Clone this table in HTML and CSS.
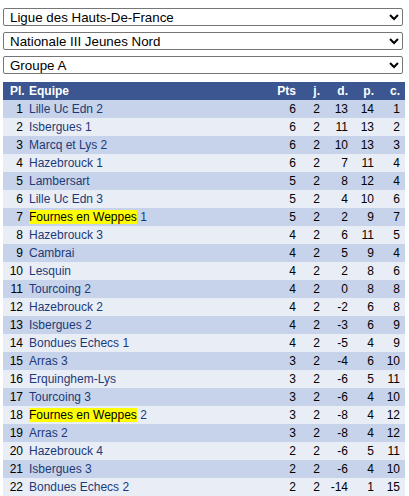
FILE: index.html
```html
<!DOCTYPE html>
<html lang="fr">
<head>
<meta charset="utf-8">
<title>Classement</title>
<link rel="stylesheet" href="styles.css">
</head>
<body>
<div class="filters">
  <select class="sel"><option>Ligue des Hauts-De-France</option></select>
  <select class="sel"><option>Nationale III Jeunes Nord</option></select>
  <select class="sel"><option>Groupe A</option></select>
</div>
<table class="standings">
  <colgroup>
    <col class="c-pl"><col class="c-team"><col class="c-pts"><col class="c-j"><col class="c-d"><col class="c-p"><col class="c-c">
  </colgroup>
  <thead>
    <tr><th class="pl">Pl.</th><th class="team">Equipe</th><th class="num">Pts</th><th class="num">j.</th><th class="num">d.</th><th class="num">p.</th><th class="num">c.</th></tr>
  </thead>
  <tbody>
    <tr><td class="pl">1</td><td class="team">Lille Uc Edn 2</td><td class="num">6</td><td class="num">2</td><td class="num">13</td><td class="num">14</td><td class="num">1</td></tr>
    <tr><td class="pl">2</td><td class="team">Isbergues 1</td><td class="num">6</td><td class="num">2</td><td class="num">11</td><td class="num">13</td><td class="num">2</td></tr>
    <tr><td class="pl">3</td><td class="team">Marcq et Lys 2</td><td class="num">6</td><td class="num">2</td><td class="num">10</td><td class="num">13</td><td class="num">3</td></tr>
    <tr><td class="pl">4</td><td class="team">Hazebrouck 1</td><td class="num">6</td><td class="num">2</td><td class="num">7</td><td class="num">11</td><td class="num">4</td></tr>
    <tr><td class="pl">5</td><td class="team">Lambersart</td><td class="num">5</td><td class="num">2</td><td class="num">8</td><td class="num">12</td><td class="num">4</td></tr>
    <tr><td class="pl">6</td><td class="team">Lille Uc Edn 3</td><td class="num">5</td><td class="num">2</td><td class="num">4</td><td class="num">10</td><td class="num">6</td></tr>
    <tr><td class="pl">7</td><td class="team"><span class="hl">Fournes en Weppes</span> 1</td><td class="num">5</td><td class="num">2</td><td class="num">2</td><td class="num">9</td><td class="num">7</td></tr>
    <tr><td class="pl">8</td><td class="team">Hazebrouck 3</td><td class="num">4</td><td class="num">2</td><td class="num">6</td><td class="num">11</td><td class="num">5</td></tr>
    <tr><td class="pl">9</td><td class="team">Cambrai</td><td class="num">4</td><td class="num">2</td><td class="num">5</td><td class="num">9</td><td class="num">4</td></tr>
    <tr><td class="pl">10</td><td class="team">Lesquin</td><td class="num">4</td><td class="num">2</td><td class="num">2</td><td class="num">8</td><td class="num">6</td></tr>
    <tr><td class="pl">11</td><td class="team">Tourcoing 2</td><td class="num">4</td><td class="num">2</td><td class="num">0</td><td class="num">8</td><td class="num">8</td></tr>
    <tr><td class="pl">12</td><td class="team">Hazebrouck 2</td><td class="num">4</td><td class="num">2</td><td class="num">-2</td><td class="num">6</td><td class="num">8</td></tr>
    <tr><td class="pl">13</td><td class="team">Isbergues 2</td><td class="num">4</td><td class="num">2</td><td class="num">-3</td><td class="num">6</td><td class="num">9</td></tr>
    <tr><td class="pl">14</td><td class="team">Bondues Echecs 1</td><td class="num">4</td><td class="num">2</td><td class="num">-5</td><td class="num">4</td><td class="num">9</td></tr>
    <tr><td class="pl">15</td><td class="team">Arras 3</td><td class="num">3</td><td class="num">2</td><td class="num">-4</td><td class="num">6</td><td class="num">10</td></tr>
    <tr><td class="pl">16</td><td class="team">Erquinghem-Lys</td><td class="num">3</td><td class="num">2</td><td class="num">-6</td><td class="num">5</td><td class="num">11</td></tr>
    <tr><td class="pl">17</td><td class="team">Tourcoing 3</td><td class="num">3</td><td class="num">2</td><td class="num">-6</td><td class="num">4</td><td class="num">10</td></tr>
    <tr><td class="pl">18</td><td class="team"><span class="hl">Fournes en Weppes</span> 2</td><td class="num">3</td><td class="num">2</td><td class="num">-8</td><td class="num">4</td><td class="num">12</td></tr>
    <tr><td class="pl">19</td><td class="team">Arras 2</td><td class="num">3</td><td class="num">2</td><td class="num">-8</td><td class="num">4</td><td class="num">12</td></tr>
    <tr><td class="pl">20</td><td class="team">Hazebrouck 4</td><td class="num">2</td><td class="num">2</td><td class="num">-6</td><td class="num">5</td><td class="num">11</td></tr>
    <tr><td class="pl">21</td><td class="team">Isbergues 3</td><td class="num">2</td><td class="num">2</td><td class="num">-6</td><td class="num">4</td><td class="num">10</td></tr>
    <tr><td class="pl">22</td><td class="team">Bondues Echecs 2</td><td class="num">2</td><td class="num">2</td><td class="num">-14</td><td class="num">1</td><td class="num">15</td></tr>
  </tbody>
</table>
</body>
</html>
```
FILE: styles.css
```css
html, body {
  background: #ffffff;
}
body {
  margin: 8px 4px 0 3px;
  font-family: "Liberation Sans", Arial, sans-serif;
}
.filters {
  display: flex;
  flex-direction: column;
  gap: 6px;
  margin-bottom: 8px;
}
.sel {
  width: 400px;
  height: 18px;
  font-family: "Liberation Sans", Arial, sans-serif;
  font-size: 13.333px;
  color: #000;
  background: #fff;
  border: 1px solid #767676;
  border-radius: 2px;
  padding: 0 0 0 2px;
  margin: 0;
}
.standings {
  width: 402px;
  table-layout: fixed;
  border-collapse: collapse;
  border-spacing: 0;
  font-size: 12px;
}
.c-pl { width: 24px; }
.c-pts { width: 31px; }
.c-j { width: 24px; }
.c-d { width: 28px; }
.c-p { width: 26px; }
.c-c { width: 26px; }
.standings th,
.standings td {
  height: 18px;
  line-height: 18px;
  padding: 0;
  white-space: nowrap;
}
.standings thead tr {
  background: #3b5690;
}
.standings th {
  color: #ffffff;
  font-weight: bold;
}
.standings th.pl {
  text-align: left;
  padding-left: 7px;
}
.standings td.pl {
  text-align: right;
  padding-right: 4px;
  color: #000;
}
.standings .team {
  text-align: left;
  padding-left: 2px;
  color: #1c3a78;
}
.standings th.team {
  color: #fff;
}
.standings .num {
  text-align: right;
  padding-right: 5px;
}
.standings td.num {
  color: #000;
}
.standings tbody tr:nth-child(odd) {
  background: #c7d3ea;
}
.standings tbody tr:nth-child(even) {
  background: #e9edf6;
}
.hl {
  background: #ffff00;
  color: #000;
}
```
